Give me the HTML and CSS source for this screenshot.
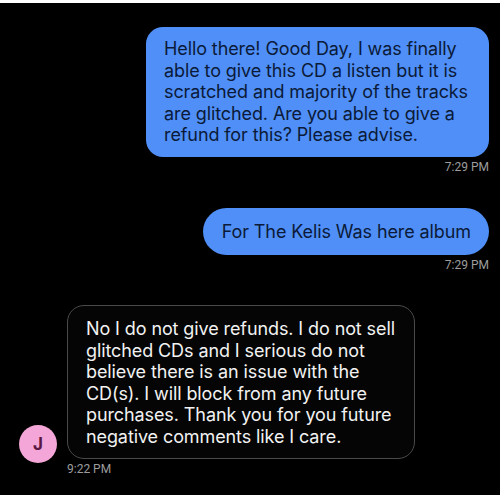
FILE: index.html
```html
<!DOCTYPE html>
<html>
<head>
<meta charset="utf-8">
<link rel="stylesheet" href="styles.css">
</head>
<body>
<div class="screen">
  <div class="msg-out">
    <div class="bubble bubble-blue bubble-long">Hello there! Good Day, I was finally<br>able to give this CD a listen but it is<br>scratched and majority of the tracks<br>are glitched. Are you able to give a<br>refund for this? Please advise.</div>
    <div class="time">7:29 PM</div>
  </div>
  <div class="msg-out msg-gap">
    <div class="bubble bubble-blue bubble-pill">For The Kelis Was here album</div>
    <div class="time">7:29 PM</div>
  </div>
  <div class="msg-in msg-gap-in">
    <div class="avatar">J</div>
    <div class="in-col">
      <div class="bubble bubble-dark">No I do not give refunds. I do not sell<br>glitched CDs and I serious do not<br>believe there is an issue with the<br>CD(s). I will block from any future<br>purchases. Thank you for you future<br>negative comments like I care.</div>
      <div class="time">9:22 PM</div>
    </div>
  </div>
</div>
</body>
</html>
```
FILE: styles.css
```css
html, body {
  margin: 0;
  padding: 0;
  background: #ffffff;
}
.screen {
  margin-top: 3px;
  height: 492px;
  background: #000000;
  box-sizing: border-box;
  padding: 24px 11px 0 0;
  display: flex;
  flex-direction: column;
  font-family: Inter, Roboto, "Liberation Sans", sans-serif;
}
.msg-out {
  align-self: flex-end;
  display: flex;
  flex-direction: column;
  align-items: flex-end;
}
.msg-gap {
  margin-top: 34px;
}
.msg-gap-in {
  margin-top: 33px;
}
.bubble {
  font-size: 18px;
  line-height: 21.5px;
  box-sizing: border-box;
  letter-spacing: -0.1px;
}
.bubble-blue {
  background: #4f8ff7;
  color: #0b1a38;
}
.bubble-long {
  width: 343px;
  height: 130px;
  border-radius: 17px;
  padding: 11px 8px 0 18px;
}
.bubble-pill {
  height: 47px;
  border-radius: 24px;
  padding: 0 18px 0 19px;
  line-height: 47px;
}
.time {
  font-size: 12px;
  line-height: 14px;
  color: #9d9d9d;
  margin-top: 3px;
  font-family: Roboto, "Liberation Sans", sans-serif;
}
.msg-in {
  display: flex;
  align-items: flex-end;
  padding-left: 19px;
}
.avatar {
  width: 38px;
  height: 38px;
  border-radius: 50%;
  background: #f3a6d7;
  color: #5a1742;
  font-weight: 700;
  font-size: 17px;
  display: flex;
  align-items: center;
  justify-content: center;
  margin-bottom: 13px;
  margin-right: 10px;
}
.in-col {
  display: flex;
  flex-direction: column;
}
.bubble-dark {
  width: 348px;
  height: 154px;
  border: 1.5px solid #4a4a4a;
  border-radius: 17px;
  background: #050505;
  color: #f2f2f2;
  padding: 12px 6px 0 18px;
}
```
